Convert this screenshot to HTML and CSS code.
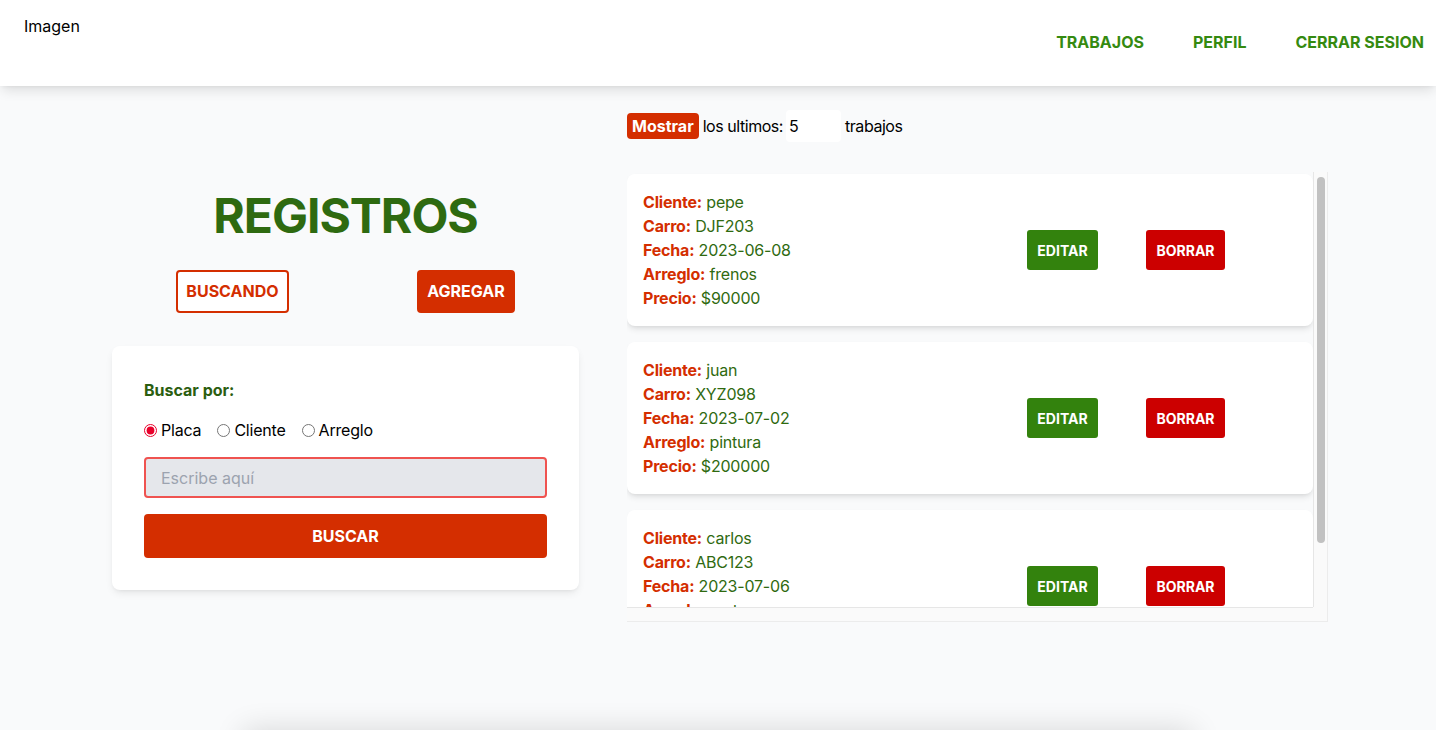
FILE: index.html
```html
<!DOCTYPE html>
<html lang="es">
<head>
<meta charset="utf-8">
<title>Registros</title>
<link rel="stylesheet" href="styles.css">
</head>
<body>
<header class="topbar">
  <div class="logo">Imagen</div>
  <nav class="nav">
    <a class="nav-link" href="#">TRABAJOS</a>
    <a class="nav-link" href="#">PERFIL</a>
    <a class="nav-link" href="#">CERRAR SESION</a>
  </nav>
</header>
<main class="main">
  <section class="left">
    <h1 class="title">REGISTROS</h1>
    <div class="actions">
      <button class="btn btn-outline">BUSCANDO</button>
      <button class="btn btn-solid">AGREGAR</button>
    </div>
    <form class="search-card">
      <p class="search-label">Buscar por:</p>
      <div class="radios">
        <label class="radio"><input type="radio" name="by" checked>Placa</label>
        <label class="radio"><input type="radio" name="by">Cliente</label>
        <label class="radio"><input type="radio" name="by">Arreglo</label>
      </div>
      <input class="search-input" type="text" placeholder="Escribe aquí">
      <button class="btn-search" type="button">BUSCAR</button>
    </form>
  </section>
  <section class="right">
    <div class="toolbar">
      <span class="badge">Mostrar</span>
      <span class="tb-text">los ultimos:</span>
      <input class="count" type="text" value="5">
      <span class="tb-text">trabajos</span>
    </div>
    <div class="list-frame">
      <div class="list">
        <article class="job">
          <div class="job-info">
            <div><b>Cliente:</b> pepe</div>
            <div><b>Carro:</b> DJF203</div>
            <div><b>Fecha:</b> 2023-06-08</div>
            <div><b>Arreglo:</b> frenos</div>
            <div><b>Precio:</b> $90000</div>
          </div>
          <div class="job-actions">
            <button class="btn-edit">EDITAR</button>
            <button class="btn-del">BORRAR</button>
          </div>
        </article>
        <article class="job">
          <div class="job-info">
            <div><b>Cliente:</b> juan</div>
            <div><b>Carro:</b> XYZ098</div>
            <div><b>Fecha:</b> 2023-07-02</div>
            <div><b>Arreglo:</b> pintura</div>
            <div><b>Precio:</b> $200000</div>
          </div>
          <div class="job-actions">
            <button class="btn-edit">EDITAR</button>
            <button class="btn-del">BORRAR</button>
          </div>
        </article>
        <article class="job">
          <div class="job-info">
            <div><b>Cliente:</b> carlos</div>
            <div><b>Carro:</b> ABC123</div>
            <div><b>Fecha:</b> 2023-07-06</div>
            <div><b>Arreglo:</b> motor</div>
            <div><b>Precio:</b> $150000</div>
          </div>
          <div class="job-actions">
            <button class="btn-edit">EDITAR</button>
            <button class="btn-del">BORRAR</button>
          </div>
        </article>
      </div>
      <div class="vtrack"><div class="vthumb"></div></div>
      <div class="htrack"></div>
      <div class="corner"></div>
    </div>
  </section>
</main>
<footer class="footer"></footer>
</body>
</html>
```
FILE: styles.css
```css
html, body {
  margin: 0;
  padding: 0;
  overflow: hidden;
}
body {
  font-family: Inter, "Noto Sans", sans-serif;
  font-size: 16px;
  line-height: 24px;
  color: #000;
  background: #f9fafb;
}
.topbar {
  position: relative;
  z-index: 2;
  height: 86px;
  box-sizing: border-box;
  background: #fff;
  display: flex;
  justify-content: space-between;
  box-shadow: 0 6px 12px -2px rgba(0,0,0,0.12), 0 2px 4px -2px rgba(0,0,0,0.06);
}
.logo {
  padding: 14px 0 0 24px;
}
.nav {
  display: flex;
  align-items: center;
  gap: 49px;
  padding-right: 12px;
  padding-bottom: 2px;
}
.nav-link {
  color: #358a10;
  font-weight: 700;
  text-decoration: none;
}
.main {
  height: 644px;
  box-sizing: border-box;
  display: grid;
  grid-template-columns: 467px 701px;
  column-gap: 48px;
  padding: 24px 0 0 112px;
  align-items: start;
}
.left {
  display: flex;
  flex-direction: column;
}
.title {
  margin: 82px 0 0;
  text-align: center;
  font-size: 48px;
  line-height: 48px;
  font-weight: 700;
  letter-spacing: -1px;
  color: #2e6a10;
}
.actions {
  margin-top: 30px;
  display: flex;
  justify-content: space-around;
}
.btn {
  font-family: inherit;
  font-size: 16px;
  line-height: 24px;
  font-weight: 700;
  padding: 8px 8px;
  border-radius: 4px;
  border: 2px solid #d42e00;
  cursor: pointer;
  height: 43px;
  box-sizing: border-box;
  padding-top: 7px;
  padding-bottom: 8px;
}
.btn-outline {
  background: #fff;
  color: #d42e00;
}
.btn-solid {
  background: #d42e00;
  color: #fff;
}
.search-card {
  margin-top: 33px;
  background: #fff;
  border-radius: 8px;
  padding: 32px;
  box-shadow: 0 4px 8px -2px rgba(0,0,0,0.1), 0 2px 4px -2px rgba(0,0,0,0.06);
  display: flex;
  flex-direction: column;
}
.search-label {
  margin: 0;
  font-weight: 700;
  color: #2b5e10;
}
.radios {
  margin-top: 16px;
  display: flex;
  gap: 16px;
  letter-spacing: -0.2px;
}
.radio {
  display: flex;
  align-items: center;
}
.radio input {
  margin: 0 4px 0 0;
  width: 13px;
  height: 13px;
  accent-color: #e8002a;
}
.search-input {
  margin-top: 15px;
  height: 41px;
  box-sizing: border-box;
  border: 2px solid #ef5350;
  border-radius: 4px;
  background: #e5e7eb;
  padding: 0 15px;
  font-family: inherit;
  font-size: 16px;
  outline: none;
}
.search-input::placeholder {
  color: #9ca3af;
}
.btn-search {
  margin-top: 16px;
  height: 44px;
  border: none;
  border-radius: 4px;
  background: #d42e00;
  color: #fff;
  font-family: inherit;
  font-size: 16px;
  font-weight: 700;
}
.right {
  display: flex;
  flex-direction: column;
}
.toolbar {
  height: 32px;
  display: flex;
  align-items: center;
}
.tb-text {
  letter-spacing: -0.45px;
}
.badge {
  background: #d42e00;
  color: #fff;
  font-weight: 700;
  border-radius: 4px;
  padding: 1px 5px;
  line-height: 24px;
  margin-right: 4px;
}
.count {
  width: 55px;
  height: 32px;
  box-sizing: border-box;
  border: none;
  border-radius: 4px;
  background: #fff;
  padding: 0 3px;
  margin: 0 4px 0 3px;
  font-family: inherit;
  font-size: 16px;
  outline: none;
}
.list-frame {
  margin-top: 30px;
  height: 450px;
  display: grid;
  grid-template-columns: 686px 15px;
  grid-template-rows: 435px 15px;
}
.list {
  overflow: hidden;
  padding-top: 2px;
}
.vtrack {
  background: #fafafa;
  border-left: 1px solid #e6e6e6;
  border-right: 1px solid #ececec;
  box-sizing: border-box;
  padding: 5px 0 0 3px;
}
.vthumb {
  width: 8px;
  height: 366px;
  border-radius: 4px;
  background: #c1c1c1;
}
.htrack {
  background: #fafafa;
  border-top: 1px solid #e6e6e6;
  border-bottom: 1px solid #ececec;
  box-sizing: border-box;
}
.corner {
  background: #fafafa;
  border-bottom: 1px solid #ececec;
  border-right: 1px solid #ececec;
  box-sizing: border-box;
}
.job {
  background: #fff;
  border-radius: 8px;
  padding: 16px;
  margin-bottom: 16px;
  display: flex;
  align-items: center;
  box-shadow: 0 4px 6px -1px rgba(0,0,0,0.1), 0 2px 4px -2px rgba(0,0,0,0.08);
}
.job-info {
  flex: 1;
  color: #2f6a10;
  letter-spacing: -0.2px;
}
.job-info b {
  color: #d42e00;
  font-weight: 700;
}
.job-actions {
  display: flex;
  gap: 48px;
  margin-right: 72px;
}
.btn-edit, .btn-del {
  height: 40px;
  border: none;
  border-radius: 3px;
  color: #fff;
  font-family: inherit;
  font-size: 14px;
  font-weight: 700;
  padding: 0 10px;
}
.btn-edit {
  background: #33820d;
  width: 71px;
}
.btn-del {
  background: #cc0000;
  width: 79px;
}
.footer {
  width: 950px;
  height: 60px;
  margin: 0 auto;
  background: #f9fafb;
  box-shadow: 0 0 30px rgba(0,0,0,0.14);
}
```
